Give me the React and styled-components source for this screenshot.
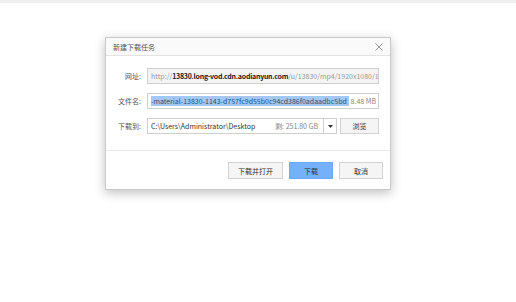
import React from "react";
import styled, { createGlobalStyle } from "styled-components";

const GlobalStyle = createGlobalStyle`
  html, body {
    margin: 0;
    padding: 0;
    background: #ffffff;
    width: 516px;
    height: 302px;
    overflow: hidden;
  }
  body {
    font-family: "Noto Sans CJK SC", "Noto Sans", sans-serif;
    font-size: 7px;
    color: #333;
  }
`;

const Page = styled.div`
  width: 516px;
  height: 302px;
  display: flex;
  flex-direction: column;
`;

const TopStrip = styled.div`
  height: 3px;
  background: #efefef;
`;

const Stage = styled.div`
  padding: 34px 0 0 105px;
`;

const Dialog = styled.div`
  width: 284px;
  border: 1px solid #c9c9c9;
  background: #fff;
  box-shadow: 0 3px 10px rgba(0, 0, 0, 0.25);
`;

const TitleBar = styled.div`
  height: 17px;
  display: flex;
  align-items: center;
  justify-content: space-between;
  padding: 0 7px 0 7px;
  background: #fafafa;
  border-bottom: 1px solid #e3e3e3;
  color: #555;
`;

const CloseIcon = () => (
  <svg width="8" height="8" viewBox="0 0 8 8">
    <path d="M0.5 0.5 L7.5 7.5 M7.5 0.5 L0.5 7.5" stroke="#888" strokeWidth="0.9" />
  </svg>
);

const Body = styled.div`
  padding: 12px 11px 16px 0;
  display: flex;
  flex-direction: column;
  gap: 9px;
  border-bottom: 1px solid #e8e8e8;
`;

const Row = styled.div`
  display: flex;
  align-items: center;
  height: 16px;
`;

const Label = styled.div`
  width: 35px;
  text-align: right;
  margin-right: 6px;
  color: #555;
`;

const Field = styled.div`
  flex: 1;
  height: 16px;
  box-sizing: border-box;
  border: 1px solid #cfcfcf;
  background: ${(p) => (p.$disabled ? "#f4f4f4" : "#fff")};
  display: flex;
  align-items: center;
  padding: 0 2px 0 3px;
  overflow: hidden;
  white-space: nowrap;
`;

const Muted = styled.span`
  color: #9a9a9a;
`;

const Strong = styled.span`
  color: #222;
  font-weight: 700;
  letter-spacing: -0.25px;
`;

const Selected = styled.span`
  background: #a3c8f5;
  color: #2b4f7a;
  flex: 1;
  overflow: hidden;
`;

const Size = styled.span`
  color: #888;
  margin-left: 2px;
`;

const Combo = styled.div`
  width: 190px;
  height: 16px;
  box-sizing: border-box;
  border: 1px solid #cfcfcf;
  display: flex;
  align-items: center;
  white-space: nowrap;
`;

const ComboText = styled.span`
  flex: 1;
  padding-left: 3px;
  color: #333;
`;

const Free = styled.span`
  color: #888;
  padding-right: 5px;
`;

const ComboArrow = styled.div`
  width: 12px;
  height: 100%;
  border-left: 1px solid #cfcfcf;
  display: flex;
  align-items: center;
  justify-content: center;
`;

const Button = styled.button`
  height: 17px;
  min-width: ${(p) => p.$w || 43}px;
  box-sizing: border-box;
  border: 1px solid ${(p) => (p.$primary ? "#6aa9f6" : "#d2d2d2")};
  background: ${(p) => (p.$primary ? "#74b1fa" : "#f5f5f5")};
  color: #333;
  font-family: inherit;
  font-size: 7px;
  padding: 0;
  display: flex;
  align-items: center;
  justify-content: center;
`;

const BrowseButton = styled(Button)`
  margin-left: 3px;
  width: 39px;
  min-width: 39px;
  height: 16px;
`;

const Footer = styled.div`
  display: flex;
  justify-content: flex-end;
  gap: 6px;
  padding: 11px 7px 10px 0;
`;

export default function App() {
  return (
    <>
      <GlobalStyle />
      <Page>
        <TopStrip />
        <Stage>
          <Dialog>
            <TitleBar>
              <span>新建下载任务</span>
              <CloseIcon />
            </TitleBar>
            <Body>
              <Row>
                <Label>网址:</Label>
                <Field $disabled>
                  <Muted>http://</Muted>
                  <Strong>13830.long-vod.cdn.aodianyun.com</Strong>
                  <Muted>/u/13830/mp4/1920x1080/1(</Muted>
                </Field>
              </Row>
              <Row>
                <Label>文件名:</Label>
                <Field>
                  <Selected>-material-13830-1143-d757fc9d55b0c94cd386f0adaadbc5bd</Selected>
                  <Size>8.48 MB</Size>
                </Field>
              </Row>
              <Row>
                <Label>下载到:</Label>
                <Combo>
                  <ComboText>C:\Users\Administrator\Desktop</ComboText>
                  <Free>剩: 251.80 GB</Free>
                  <ComboArrow>
                    <svg width="5" height="3" viewBox="0 0 5 3">
                      <path d="M0 0 L5 0 L2.5 3 Z" fill="#333" />
                    </svg>
                  </ComboArrow>
                </Combo>
                <BrowseButton>浏览</BrowseButton>
              </Row>
            </Body>
            <Footer>
              <Button $w={55}>下载并打开</Button>
              <Button $primary $w={44}>下载</Button>
              <Button $w={44}>取消</Button>
            </Footer>
          </Dialog>
        </Stage>
      </Page>
    </>
  );
}
